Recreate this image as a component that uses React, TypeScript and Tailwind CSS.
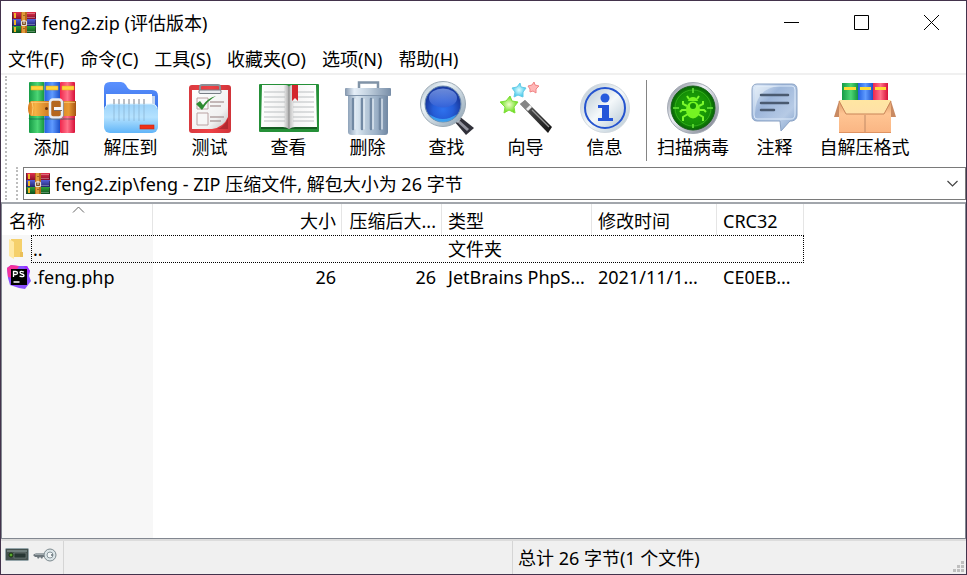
import type { ReactNode } from 'react';

function BooksLogo({ className }: { className: string }) {
  return (
    <svg className={className} viewBox="0 0 24 21" aria-hidden="true">
      <defs>
        <linearGradient id="lgR" x2="0" y2="1"><stop stopColor="#e0304a" /><stop offset="1" stopColor="#8a0f2c" /></linearGradient>
        <linearGradient id="lgB" x2="0" y2="1"><stop stopColor="#5560d8" /><stop offset="1" stopColor="#22256e" /></linearGradient>
        <linearGradient id="lgG" x2="0" y2="1"><stop stopColor="#2fa13a" /><stop offset="1" stopColor="#0c4f1c" /></linearGradient>
      </defs>
      <rect width="24" height="7" fill="url(#lgR)" />
      <rect y="7" width="24" height="7" fill="url(#lgB)" />
      <rect y="14" width="24" height="7" fill="url(#lgG)" />
      <path d="M0 0h1v21h-1zM23 1h1v5h-1zM23 8h1v5h-1zM23 15h1v5h-1z" fill="#2b1520" opacity=".5" />
      <path d="M2 1h2v5h-2zM2 8h2v5h-2zM2 15h2v5h-2z" fill="#f0b429" />
      <path d="M15 1h8v1h-8zM15 5h8v1h-8zM15 12h8v1h-8zM15 19h8v1h-8z" fill="#fff" opacity=".3" />
      <rect x="9" width="6" height="21" fill="#b8681c" />
      <rect x="10" width="3" height="21" fill="#e09a3a" />
      <rect x="9.5" y="9" width="5" height="4.500" rx="1" fill="#7a4a20" stroke="#e6e2d8" strokeWidth="1.200" />
      <path d="M12 8v4" stroke="#f6f3ea" strokeWidth="1" />
      <path d="M11.500 3h1v1h-1zM11.500 16h1v1h-1z" fill="#5a3010" />
    </svg>
  );
}

function AddIcon() {
  return (
    <svg width="48" height="51" viewBox="0 0 48 51" aria-hidden="true">
      <defs>
        <linearGradient id="aG"><stop stopColor="#159b45" /><stop offset=".55" stopColor="#4cd675" /><stop offset="1" stopColor="#15953f" /></linearGradient>
        <linearGradient id="aB"><stop stopColor="#2360e0" /><stop offset=".5" stopColor="#5f9bff" /><stop offset="1" stopColor="#1c50c8" /></linearGradient>
        <linearGradient id="aR"><stop stopColor="#f0264c" /><stop offset=".5" stopColor="#ff7188" /><stop offset="1" stopColor="#d80f38" /></linearGradient>
        <linearGradient id="aL"><stop stopColor="#d87a1c" /><stop offset=".15" stopColor="#f7b345" /><stop offset=".5" stopColor="#c8701c" /><stop offset=".85" stopColor="#e99a32" /><stop offset="1" stopColor="#a65312" /></linearGradient>
      </defs>
      <rect x="1" width="15.500" height="51" rx="1" fill="url(#aG)" />
      <rect x="16.500" width="15.500" height="51" fill="url(#aB)" />
      <rect x="32" width="15" height="51" rx="1" fill="url(#aR)" />
      <path d="M3 4h12v4H3zM18 4h12v4H18zM34 4h12v4H34z" fill="#ffd43b" stroke="#e3a71e" strokeWidth=".5" />
      <path d="M0 36h47v2H2z" fill="#084e50" opacity=".3" />
      <path d="M3 19h45v15H3Q0 32 0 26.500 0 21 3 19Z" fill="url(#aL)" />
      <path d="M4 19.500Q6 25 4 33.500" stroke="#ffcc70" fill="none" />
      <path d="M3 20.500h44" stroke="#ffd68a" opacity=".6" />
      <circle cx="18.500" cy="26.500" r="1.500" fill="#633010" />
      <rect x="22" y="17.500" width="12" height="18" rx="3" fill="#b5671d" stroke="#e9edf2" strokeWidth="2.500" />
      <path d="M21.500 37h11q3 0 3-3V19" fill="none" stroke="#858b96" strokeWidth=".8" />
      <path d="M26 26.500h8" stroke="#f7f8fb" strokeWidth="3" />
      <path d="M26 28.500h8" stroke="#7b6d68" />
    </svg>
  );
}

function ExtractIcon() {
  return (
    <svg width="54" height="51" viewBox="0 0 54 51" aria-hidden="true">
      <defs>
        <linearGradient id="eD" x2="0" y2="1"><stop stopColor="#5b91ff" /><stop offset="1" stopColor="#2460d8" /></linearGradient>
        <linearGradient id="eF" x2="0" y2="1"><stop stopColor="#9cd3fa" /><stop offset=".45" stopColor="#b4e2ff" /><stop offset="1" stopColor="#61b5f8" /></linearGradient>
      </defs>
      <path d="M0 6Q0 0 6 0h11q3 0 5 3 2 5 6 5h20q6 0 6 6v30H0Z" fill="url(#eD)" />
      <path d="M5 14h46v18H5Z" fill="#c6d6ec" />
      <path d="M2 12h46v22H2Z" fill="#fff" />
      <rect y="22" width="54" height="29" rx="6" fill="url(#eF)" />
      <path d="M1 26q1-4 5-4h42q4 0 5 4" stroke="#d7f0ff" fill="none" />
      <path d="M10 17v5M15 17v5M20 17v5M25 17v5M30 17v5M35 17v5M40 17v5" stroke="#a6abb3" strokeWidth="1.500" />
      <path d="M10 22v17M15 22v17M20 22v17M25 22v17M30 22v17M35 22v17M40 22v17" stroke="#83a9c8" strokeWidth="1.500" opacity=".4" />
      <rect x="36" y="43" width="14" height="4" fill="#ee3018" stroke="#c92512" strokeWidth=".6" />
    </svg>
  );
}

function TestIcon() {
  return (
    <svg width="42" height="50" viewBox="0 0 42 50" aria-hidden="true">
      <defs>
        <linearGradient id="tR"><stop stopColor="#d93a3f" /><stop offset=".5" stopColor="#ef4145" /><stop offset="1" stopColor="#d0343a" /></linearGradient>
        <linearGradient id="tP" x2="1" y2="1"><stop stopColor="#fff" /><stop offset=".7" stopColor="#f1f1f1" /><stop offset="1" stopColor="#bdbdbd" /></linearGradient>
      </defs>
      <rect y="2" width="42" height="48" rx="3" fill="url(#tR)" />
      <path d="M3 46h25q8-2 11-11v11H3Z" fill="#8d1b20" opacity=".5" />
      <path d="M3 7h36v27q-4 10-16 12H3Z" fill="url(#tP)" />
      <path d="M11 9V4q0-2 2-2h16q2 0 2 2v5" fill="none" stroke="#8b9097" strokeWidth="2" />
      <rect x="10" y="7" width="22" height="3.500" rx="1" fill="#e8ebef" stroke="#777d85" />
      <path d="M8 15h11v11H8ZM8 30h11v12H8Z" fill="#f7f7f7" stroke="#b9a2a2" />
      <path d="M21 19h14M21 23h11M21 34h14M21 38h11" stroke="#b3a2a2" strokeWidth="1.500" />
      <path d="M7 21l4-3 3 4Q19 15 27 13 19 17 13 27Z" fill="#2e8b31" />
    </svg>
  );
}

function ViewIcon() {
  return (
    <svg width="60" height="49" viewBox="0 0 60 49" aria-hidden="true">
      <defs>
        <linearGradient id="vL"><stop stopColor="#fff" /><stop offset=".8" stopColor="#f2f2f2" /><stop offset="1" stopColor="#aaa" /></linearGradient>
        <linearGradient id="vR"><stop stopColor="#bababa" /><stop offset=".2" stopColor="#f4f4f4" /><stop offset="1" stopColor="#fff" /></linearGradient>
      </defs>
      <rect y="1" width="60" height="48" rx="1" fill="#259038" />
      <path d="M2 44h56v2H2z" fill="#155b22" />
      <path d="M3 2h24q3 0 3 3v41q-3-2-6-2H2Z" fill="url(#vL)" />
      <path d="M57 2H33q-3 0-3 3v41q3-2 6-2h22Z" fill="url(#vR)" />
      <path d="M5 9h21M5 14h21M5 19h21M5 24h21M5 29h21M5 34h21M5 38h21M39 9h16M34 19h21M34 24h21M34 29h21M34 34h21M34 38h21M39 14h16" stroke="#bcbfc2" strokeWidth="1.200" />
      <path d="M33 2h6v16l-3-3-3 3Z" fill="#d3262d" />
      <path d="M30 4v42" stroke="#8c8c8c" />
    </svg>
  );
}

function DeleteIcon() {
  return (
    <svg width="46" height="54" viewBox="0 0 46 54" aria-hidden="true">
      <defs>
        <linearGradient id="dB"><stop stopColor="#8fa3ba" /><stop offset=".22" stopColor="#dce8f2" /><stop offset=".45" stopColor="#b9cada" /><stop offset=".7" stopColor="#9db2c8" /><stop offset="1" stopColor="#7188a3" /></linearGradient>
        <linearGradient id="dL"><stop stopColor="#8396ad" /><stop offset=".2" stopColor="#e6eff8" /><stop offset=".5" stopColor="#c2d1df" /><stop offset="1" stopColor="#788ea8" /></linearGradient>
      </defs>
      <path d="M14 7V1.500h19V7" fill="none" stroke="#8093a7" strokeWidth="2.500" />
      <path d="M3 13h40v38q0 3-3 3H7q-4 0-4-3Z" fill="url(#dB)" />
      <path d="M8 18v30M17 18v30M26 18v30M35 18v30" stroke="#7289a3" strokeWidth="2.500" strokeLinecap="round" />
      <path d="M10 18v30M19 18v30M28 18v30M37 18v30" stroke="#edf4fa" strokeWidth="1.200" strokeLinecap="round" />
      <rect y="7" width="46" height="8" rx="1" fill="url(#dL)" />
      <path d="M1 14.500h44" stroke="#8195ac" />
    </svg>
  );
}

function FindIcon() {
  return (
    <svg width="54" height="54" viewBox="0 0 54 54" aria-hidden="true">
      <defs>
        <linearGradient id="fR" x2="1" y2="1"><stop stopColor="#9cafbf" /><stop offset=".3" stopColor="#f0f7fa" /><stop offset="1" stopColor="#889daf" /></linearGradient>
        <radialGradient id="fB" cy=".65"><stop stopColor="#2f72ee" /><stop offset=".55" stopColor="#265ed9" /><stop offset="1" stopColor="#1b3da4" /></radialGradient>
        <linearGradient id="fG" x2="0" y2="1"><stop stopColor="#87a6ed" /><stop offset="1" stopColor="#355fd4" /></linearGradient>
      </defs>
      <path d="M34 40l5-5 15 12-8 7Z" fill="#303039" />
      <path d="M38 40l10 9" stroke="#93949f" strokeWidth="3" />
      <path d="M34 35l5 5" stroke="#d0d5dc" strokeWidth="5" />
      <circle cx="23" cy="23" r="22.500" fill="url(#fR)" stroke="#9caab5" />
      <circle cx="23" cy="23" r="18" fill="url(#fB)" stroke="#6f8dab" />
      <path d="M9 33q14 10 28 0Q32 41 23 41T9 33" fill="#43baff" opacity=".7" />
      <ellipse cx="23" cy="17" rx="14" ry="9.500" fill="url(#fG)" opacity=".75" />
    </svg>
  );
}

function WizardIcon() {
  return (
    <svg width="54" height="52" viewBox="0 0 54 52" aria-hidden="true">
      <defs>
        <radialGradient id="wG"><stop stopColor="#efffc9" /><stop offset="1" stopColor="#66db19" /></radialGradient>
        <radialGradient id="wC"><stop stopColor="#e0ffff" /><stop offset="1" stopColor="#43c7ec" /></radialGradient>
        <linearGradient id="wW" x2="1" y2="1"><stop stopColor="#a3a3a3" /><stop offset=".35" stopColor="#454545" /><stop offset="1" stopColor="#111" /></linearGradient>
      </defs>
      <path d="M11 14l2 5 6 1-4 5 1 6-6-3-5 3 1-6-5-5 6-1Z" fill="url(#wG)" stroke="#7cdf35" strokeLinejoin="round" />
      <path d="M21 1l1 4 5 1-3 4v5l-5-2-4 2 1-5-3-4 5-1Z" fill="url(#wC)" stroke="#65cbe6" strokeLinejoin="round" />
      <path d="M35 0l1 3 4 1-3 3v4l-3-2-3 1v-3l-2-3 4-1Z" fill="#ffb7b7" stroke="#f08383" />
      <path d="M21 22l5-4 27 27-4 6Z" fill="url(#wW)" />
      <path d="M21 22l5-4 5 5-4 5Z" fill="#858585" />
      <path d="M27 27l4-4 2 2-4 4Z" fill="#eee" />
      <path d="M33 28l17 17" stroke="#999" strokeWidth="1.200" />
    </svg>
  );
}

function InfoIcon() {
  return (
    <svg width="50" height="50" viewBox="0 0 50 50" aria-hidden="true">
      <defs><linearGradient id="iG" x2="1" y2="1"><stop stopColor="#b7c6d2" /><stop offset=".5" stopColor="#f4f8fa" /><stop offset="1" stopColor="#b3c5d2" /></linearGradient></defs>
      <circle cx="25" cy="25" r="24.500" fill="url(#iG)" stroke="#d2d9df" />
      <circle cx="25" cy="25" r="20" fill="url(#iG)" stroke="#2554cf" strokeWidth="2" />
      <circle cx="25" cy="15" r="4.500" fill="#275bdd" />
      <path d="M18 22h11v13h4v3H18v-3h4V25h-4Z" fill="#2455d9" />
    </svg>
  );
}

function VirusIcon() {
  return (
    <svg width="52" height="52" viewBox="0 0 52 52" aria-hidden="true">
      <defs>
        <linearGradient id="sR" x2="1" y2="1"><stop stopColor="#777c88" /><stop offset=".4" stopColor="#eef1f6" /><stop offset="1" stopColor="#6d7280" /></linearGradient>
        <radialGradient id="sG"><stop stopColor="#22ae09" /><stop offset=".75" stopColor="#159006" /><stop offset="1" stopColor="#086206" /></radialGradient>
      </defs>
      <circle cx="26" cy="26" r="25.500" fill="url(#sR)" stroke="#a4aab5" />
      <circle cx="26" cy="26" r="22" fill="url(#sG)" stroke="#176119" />
      <circle cx="26" cy="26" r="18" fill="none" stroke="#4fd92b" opacity=".5" />
      <path d="M26 6v5M26 42v4M6 26h6M40 26h6" stroke="#69e73b" strokeWidth="1.500" />
      <path d="M22 17l-2-3M30 17l2-3M20 24l-4-2v-3M32 24l4-2v-3M20 28h-5l-2 2M32 28h5l2 2M21 32l-5 3v4M31 32l5 3v4" stroke="#7cf82d" strokeWidth="2" fill="none" />
      <ellipse cx="26" cy="28" rx="7" ry="8.500" fill="#75f522" />
      <path d="M21 19q1-4 5-4t5 4Z" fill="#75f522" />
      <circle cx="26" cy="24" r="3" fill="#159006" />
    </svg>
  );
}

function CommentIcon() {
  return (
    <svg width="47" height="49" viewBox="0 0 47 49" aria-hidden="true">
      <defs><linearGradient id="cG" x2="1" y2="1"><stop stopColor="#e0ebf8" /><stop offset=".35" stopColor="#9db6da" /><stop offset=".7" stopColor="#b6cae5" /><stop offset="1" stopColor="#7f9fca" /></linearGradient></defs>
      <path d="M6 1h35q5 0 5 6v25q0 5-5 6h-2l-9 10-1-10H6q-5 0-5-6V7q0-6 5-6Z" fill="url(#cG)" stroke="#8aa2c4" />
      <path d="M6 3h35q3 0 3 4v24q0 5-4 5H6q-3 0-3-4V7q0-4 3-4Z" fill="none" stroke="#deebfa" />
      <path d="M4 31Q4 6 28 3H7Q4 3 4 7Z" fill="#eef5fc" opacity=".5" />
      <path d="M10 12h27M10 20h27M10 27h13" stroke="#4a5a70" strokeWidth="2.500" strokeLinecap="round" />
    </svg>
  );
}

function SfxIcon() {
  return (
    <svg width="62" height="50" viewBox="0 0 62 50" aria-hidden="true">
      <defs>
        <linearGradient id="xF" x2="0" y2="1"><stop stopColor="#ffe6a2" /><stop offset="1" stopColor="#ffe0a8" /></linearGradient>
        <linearGradient id="xB" x2="0" y2="1"><stop stopColor="#dc9a67" /><stop offset=".4" stopColor="#ffc593" /><stop offset="1" stopColor="#fab583" /></linearGradient>
      </defs>
      <rect x="8" width="16" height="20" fill="url(#aG)" />
      <rect x="24" width="15" height="20" fill="url(#aB)" />
      <rect x="39" width="15" height="20" fill="url(#aR)" />
      <path d="M10 4h12v3H10ZM26 4h11v3H26ZM41 4h11v3H41Z" fill="#ffdc36" />
      <path d="M5 18h52v32H5Z" fill="url(#xB)" />
      <path d="M5 18v16l-5 0ZM57 18v16l5 0Z" fill="#c98a62" />
      <path d="M5 17h52l-7 14H12Z" fill="url(#xF)" />
      <path d="M5 18l7 13h38l7-13" stroke="#c98558" fill="none" />
      <path d="M31 32v18" stroke="#c08a66" />
      <path d="M5 49.500h52" stroke="#df9362" />
    </svg>
  );
}

function PhpStormIcon() {
  return (
    <svg className="h-6 w-6 shrink-0" viewBox="0 0 24 24" aria-hidden="true">
      <path d="M0 3L4 0l7 1 9 0 3 5-1 5 2 5-6 8-6-1-9-3-2-7Z" fill="#8a50ff" />
      <path d="M0 3L4 0l8 1-7 12-4-1Z" fill="#f6319b" />
      <path d="M23 6l-2 4-4-9 3 0Z" fill="#a12bff" />
      <path d="M4 4h16v16H4Z" fill="#000" />
      <path d="M6.500 12V6.500h2q2 0 2 1.500t-2 1.500h-2M17 7q-4-1.500-4 .5c0 2 4 1 4 3q0 2-4.500.7M6.500 17h6" fill="none" stroke="#fff" strokeWidth="1.300" />
    </svg>
  );
}

function FolderIcon() {
  return (
    <svg className="ml-1 h-5 w-4 shrink-0" viewBox="0 0 16 20" aria-hidden="true">
      <path d="M3 0h11v18H3Z" fill="#f5d06b" />
      <path d="M1 0l5 3v17l-5-3Z" fill="#ffe9a4" />
      <path d="M12 13h3v5h-3Z" fill="#eabf58" />
    </svg>
  );
}

function Tool({ label, icon, width }: { label: string; icon: ReactNode; width: string }) {
  return (
    <button className={`flex shrink-0 flex-col items-center ${width}`}>
      <span className="flex h-[55px] items-center justify-center">{icon}</span>
      <span className="h-6 whitespace-nowrap leading-6">{label}</span>
    </button>
  );
}

const menus = ['文件(F)', '命令(C)', '工具(S)', '收藏夹(O)', '选项(N)', '帮助(H)'];

const mainTools = [
  { label: '添加', icon: <AddIcon /> },
  { label: '解压到', icon: <ExtractIcon /> },
  { label: '测试', icon: <TestIcon /> },
  { label: '查看', icon: <ViewIcon /> },
  { label: '删除', icon: <DeleteIcon /> },
  { label: '查找', icon: <FindIcon /> },
  { label: '向导', icon: <WizardIcon /> },
  { label: '信息', icon: <InfoIcon /> },
];

const columns = [
  { label: '名称', width: 'w-[151px]', align: 'text-left' },
  { label: '大小', width: 'w-[189px]', align: 'text-right' },
  { label: '压缩后大...', width: 'w-[100px]', align: 'text-right' },
  { label: '类型', width: 'w-[150px]', align: 'text-left' },
  { label: '修改时间', width: 'w-[125px]', align: 'text-left' },
  { label: 'CRC32', width: 'w-[87px]', align: 'text-left' },
];

export default function App() {
  return (
    <div className="flex h-screen flex-col overflow-hidden border border-[#43334c] bg-white font-['Noto_Sans','Noto_Sans_CJK_SC',sans-serif] text-[18px] leading-6 text-black">
      <header className="flex h-[43px] shrink-0 items-center">
        <BooksLogo className="ml-[11px] h-[21px] w-6" />
        <h1 className="ml-1.5 flex-1">feng2.zip (评估版本)</h1>
        <button aria-label="最小化" className="flex h-full w-[70px] items-center justify-center">
          <svg width="15" height="15" viewBox="0 0 15 15"><path d="M0 7.500h15" stroke="#000" /></svg>
        </button>
        <button aria-label="最大化" className="flex h-full w-[70px] items-center justify-center">
          <svg width="15" height="15" viewBox="0 0 15 15"><path d="M.5.5h14v14H.5Z" fill="none" stroke="#000" /></svg>
        </button>
        <button aria-label="关闭" className="flex h-full w-[70px] items-center justify-center">
          <svg width="15" height="15" viewBox="0 0 15 15"><path d="M0 0l15 15M15 0L0 15" stroke="#000" /></svg>
        </button>
      </header>
      <nav className="flex h-[29px] shrink-0 items-center gap-4 pl-[7px]">
        {menus.map((menu) => (
          <button key={menu} className="whitespace-nowrap">{menu}</button>
        ))}
      </nav>
      <div className="flex shrink-0 border-t-2 border-[#f0f0f0] pt-px pl-1">
        <div className="w-[7px] shrink-0 border-l-2 border-dotted border-[#bdbdbd]" />
        <div className="flex min-w-0 flex-1 flex-col">
          <div className="flex h-[91px] items-start pt-1">
            {mainTools.map((tool) => (
              <Tool key={tool.label} label={tool.label} icon={tool.icon} width="w-[79px]" />
            ))}
            <div className="ml-0.5 h-[81px] w-px shrink-0 bg-[#858585]" />
            <Tool label="扫描病毒" icon={<VirusIcon />} width="w-[92px]" />
            <Tool label="注释" icon={<CommentIcon />} width="w-[71px]" />
            <Tool label="自解压格式" icon={<SfxIcon />} width="w-[109px]" />
          </div>
          <div className="flex h-[33px] pl-1">
            <div className="w-[7px] shrink-0 border-l-2 border-dotted border-[#bdbdbd]" />
            <div className="flex min-w-0 flex-1 items-center border border-[#7a7a7a] pl-0.5">
              <BooksLogo className="h-[21px] w-6 shrink-0" />
              <select aria-label="路径" className="ml-[5px] h-full min-w-0 flex-1 appearance-none bg-transparent outline-none">
                <option>feng2.zip\feng - ZIP 压缩文件, 解包大小为 26 字节</option>
              </select>
              <svg className="mr-1.5 shrink-0" width="13" height="13" viewBox="0 0 13 13"><path d="M1.500 4l5 5 5-5" fill="none" stroke="#444" strokeWidth="1.200" /></svg>
            </div>
          </div>
        </div>
      </div>
      <main className="mt-0.5 flex min-h-0 flex-1 flex-col border border-t-2 border-[#828790] border-t-[#a2a6ac]">
        <table className="w-[802px] shrink-0 table-fixed border-separate border-spacing-0">
          <thead>
            <tr className="h-[31px]">
              {columns.map((column) => (
                <th key={column.label} className={`relative border-r border-[#e5e5e5] p-0 font-normal ${column.width}`}>
                  <button className={`block w-full px-[5px] pt-0.5 whitespace-nowrap ${column.align} ${column.label === '名称' ? 'pl-[7px]' : 'pl-1.5'}`}>{column.label}</button>
                  {column.label === '名称' && (
                    <svg className="absolute top-0.5 left-[70px]" width="13" height="7" viewBox="0 0 13 7" aria-hidden="true"><path d="M1 6.500l5.500-5.500 5.500 5.500" fill="none" stroke="#666" /></svg>
                  )}
                </th>
              ))}
            </tr>
          </thead>
          <tbody>
            <tr className="relative h-7">
              <td className="bg-[#f7f7f7] p-0">
                <div className="flex items-center pl-0.5"><FolderIcon /><span className="ml-[9px]">..</span></div>
                <span className="absolute inset-y-0 right-0 left-[29px] border border-dotted border-black" />
              </td>
              <td />
              <td />
              <td className="px-1.5 py-0">文件夹</td>
              <td />
              <td />
            </tr>
            <tr className="h-7">
              <td className="bg-[#f7f7f7] p-0">
                <div className="flex items-center pl-[5px]"><PhpStormIcon /><span className="ml-0.5">.feng.php</span></div>
              </td>
              <td className="px-1.5 py-0 text-right">26</td>
              <td className="px-1.5 py-0 text-right">26</td>
              <td className="px-1.5 py-0 whitespace-nowrap">JetBrains PhpS...</td>
              <td className="px-1.5 py-0 whitespace-nowrap">2021/11/1...</td>
              <td className="px-1.5 py-0 whitespace-nowrap">CE0EB...</td>
            </tr>
          </tbody>
        </table>
        <div className="w-[151px] flex-1 bg-[#f7f7f7]" />
      </main>
      <footer className="flex h-[35px] shrink-0 border-t-2 border-[#dcdcdc] bg-[#f0f0f0]">
        <div className="flex w-[63px] shrink-0 items-start gap-1 border-r border-[#d5d5d5] pt-[7px] pl-1">
          <svg width="24" height="14" viewBox="0 0 24 14" aria-label="磁盘">
            <rect x=".5" y=".5" width="23" height="12" rx="1" fill="#44514f" stroke="#94a5aa" />
            <path d="M2 2h20v2H2Z" fill="#6f7e7c" />
            <rect x="9" y="5" width="12" height="5" fill="#273633" stroke="#8b9895" strokeWidth=".5" />
            <circle cx="6" cy="7" r="2" fill="#57a82d" stroke="#18320f" />
          </svg>
          <svg width="24" height="14" viewBox="0 0 24 14" aria-label="密码">
            <path d="M0 7l3-2h10v4h-3l-1 2-2-2-2 2-1-2H2Z" fill="#6d777d" />
            <path d="M2 6h11" stroke="#d6dddf" />
            <circle cx="17" cy="7" r="6" fill="#dce5e8" stroke="#7c898e" />
            <circle cx="17" cy="7" r="3" fill="#f2f6f7" stroke="#89969c" />
            <circle cx="19" cy="7" r="1" fill="#68757b" />
          </svg>
        </div>
        <div className="flex-1 border-r border-[#d5d5d5]" />
        <div className="flex flex-1 items-end justify-between pl-[5px]">
          <p className="mb-1 whitespace-nowrap">总计 26 字节(1 个文件)</p>
          <svg className="mr-0.5 mb-0.5" width="11" height="11" viewBox="0 0 11 11" aria-hidden="true"><path d="M8 0h3v3H8ZM4 4h3v3H4ZM8 4h3v3H8ZM0 8h3v3H0ZM4 8h3v3H4ZM8 8h3v3H8Z" fill="#bfbfbf" /></svg>
        </div>
      </footer>
    </div>
  );
}
